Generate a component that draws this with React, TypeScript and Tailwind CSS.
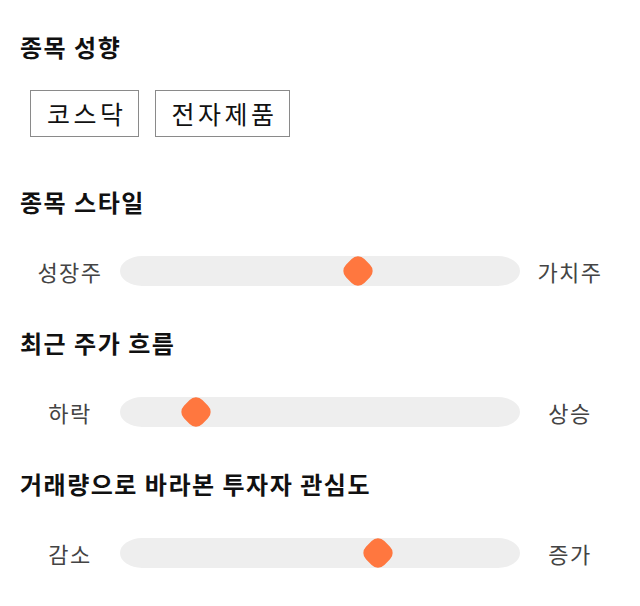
const FONT = "font-['Noto_Sans_CJK_KR','Noto_Sans',sans-serif]";

type SliderRow = { title: string; left: string; right: string; value: number };

const ROWS: SliderRow[] = [
  { title: '종목 스타일', left: '성장주', right: '가치주', value: 0.595 },
  { title: '최근 주가 흐름', left: '하락', right: '상승', value: 0.19 },
  { title: '거래량으로 바라본 투자자 관심도', left: '감소', right: '증가', value: 0.645 },
];

function Heading({ children }: { children: React.ReactNode }) {
  return (
    <h2 className="h-[36px] pl-[20px] text-[24px] font-bold leading-[36px] tracking-[1.5px] text-[#111]">
      {children}
    </h2>
  );
}

function Tag({ label }: { label: string }) {
  return (
    <div className="flex h-[47px] items-center border border-[#8a8a8a] pl-[16px] pr-[11px] text-[25px] tracking-[3.5px] text-[#111]">
      {label}
    </div>
  );
}

function Slider({ left, right, value }: { left: string; right: string; value: number }) {
  return (
    <div className="flex h-[30px] items-center px-[30px]">
      <div className="w-[80px] text-center text-[22px] tracking-[1.5px] text-[#444]">{left}</div>
      <div className="relative mx-[10px] h-[30px] w-[400px] rounded-[22px/15px] bg-[#eeeeee]">
        <div
          className="absolute top-[2px] h-[26px] w-[26px] -translate-x-1/2 rotate-45 rounded-[9px] bg-[#ff773f]"
          style={{ left: `${value * 100}%` }}
        />
      </div>
      <div className="w-[80px] text-center text-[22px] tracking-[1.5px] text-[#444]">{right}</div>
    </div>
  );
}

export default function App() {
  return (
    <div className={`h-[606px] w-[640px] bg-white pt-[29px] ${FONT}`}>
      <Heading>종목 성향</Heading>
      <div className="mt-[25px] flex gap-[16px] pl-[30px]">
        <Tag label="코스닥" />
        <Tag label="전자제품" />
      </div>
      <div className="mt-[47px] flex flex-col gap-[39px]">
        {ROWS.map((r) => (
          <div key={r.title} className="flex flex-col gap-[36px]">
            <Heading>{r.title}</Heading>
            <Slider left={r.left} right={r.right} value={r.value} />
          </div>
        ))}
      </div>
    </div>
  );
}
